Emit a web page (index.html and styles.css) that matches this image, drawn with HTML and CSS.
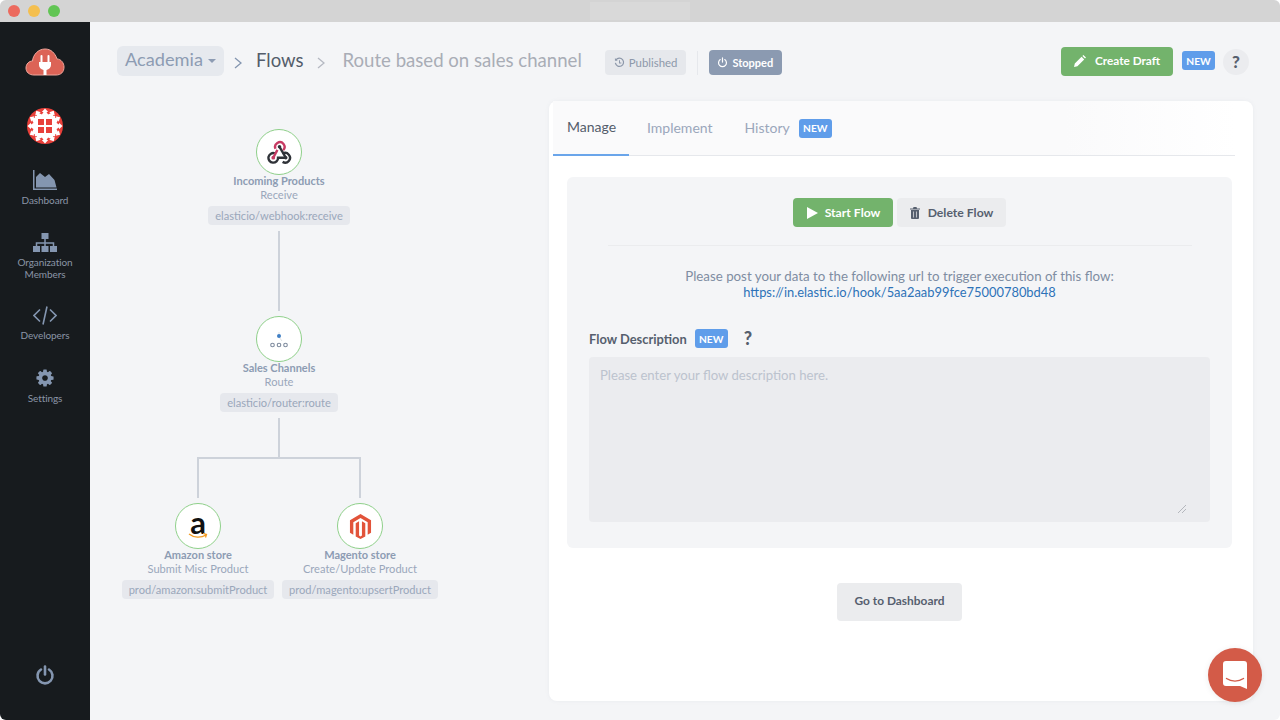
FILE: index.html
```html
<!DOCTYPE html>
<html lang="en">
<head>
<meta charset="utf-8">
<title>Route based on sales channel</title>
<link rel="stylesheet" href="styles.css">
</head>
<body>
<div class="window">
  <div class="titlebar">
    <span class="light red"></span><span class="light yellow"></span><span class="light green"></span>
    <span class="title-tab"></span>
  </div>
  <div class="app">
    <aside class="sidebar">
      <svg class="logo-cloud" viewBox="0 0 40 28" width="40" height="28"><path d="M9 27C4 27 1 24 1 20c0-4 3-7 6.500-7C8 7 13 1 20 1c6 0 10 4 12 10 4 0 7 4 7 8 0 5-3 8-8 8z" fill="#dc6356" stroke="#f0a79c" stroke-width="1"/><path d="M16.500 8v6M23.500 8v6" stroke="#fff" stroke-width="2" stroke-linecap="round"/><path d="M14 14h12v3c0 2.500-2 4.500-4.500 5v5h-3v-5C16 21.500 14 19.500 14 17z" fill="#fff"/></svg>
      <svg class="logo-org" viewBox="0 0 36 36" width="36" height="36">
        <defs>
          <clipPath id="disc"><circle cx="18" cy="18" r="18"/></clipPath>
          <path id="tree" d="M18 .5l3.200 3.500h-1.700l2.500 4h-8l2.500-4h-1.700z"/>
        </defs>
        <circle cx="18" cy="18" r="18" fill="#e8403a"/>
        <g clip-path="url(#disc)" fill="#fff">
          <use href="#tree"/>
          <use href="#tree" transform="rotate(30 18 18)"/>
          <use href="#tree" transform="rotate(60 18 18)"/>
          <use href="#tree" transform="rotate(90 18 18)"/>
          <use href="#tree" transform="rotate(120 18 18)"/>
          <use href="#tree" transform="rotate(150 18 18)"/>
          <use href="#tree" transform="rotate(180 18 18)"/>
          <use href="#tree" transform="rotate(210 18 18)"/>
          <use href="#tree" transform="rotate(240 18 18)"/>
          <use href="#tree" transform="rotate(270 18 18)"/>
          <use href="#tree" transform="rotate(300 18 18)"/>
          <use href="#tree" transform="rotate(330 18 18)"/>
          <rect x="8" y="8" width="20" height="20"/>
        </g>
        <g fill="#e8403a"><rect x="11" y="11" width="6" height="6"/><rect x="19" y="11" width="6" height="6"/><rect x="11" y="19" width="6" height="6"/><rect x="19" y="19" width="6" height="6"/></g>
      </svg>
      <nav class="nav">
        <a class="nav-item">
          <svg viewBox="0 0 24 20" width="24" height="20"><path d="M0 0h1.500v18.500H24V20H0z" fill="#8496b0"/><path d="M3 17.500V7l4-4 5 4 4-3 5.500 6 2 7.500z" fill="#8496b0"/></svg>
          <span>Dashboard</span>
        </a>
        <a class="nav-item">
          <svg viewBox="0 0 24 19" width="24" height="19"><path d="M8.500 0h7v6h-7z" fill="#8496b0"/><path d="M12 6v4M3.500 13v-3h17v3M12 10v3" fill="none" stroke="#8496b0" stroke-width="1.500"/><path d="M0 13h7v6H0zM8.500 13h7v6h-7zM17 13h7v6h-7z" fill="#8496b0"/></svg>
          <span>Organization<br>Members</span>
        </a>
        <a class="nav-item">
          <svg viewBox="0 0 24 19" width="24" height="19"><path d="M7 3.500L1 9.500l6 6M17 3.500l6 6-6 6M14 .5L10 18.500" fill="none" stroke="#8496b0" stroke-width="1.600"/></svg>
          <span>Developers</span>
        </a>
        <a class="nav-item">
          <svg viewBox="0 0 1792 1792" width="20" height="20"><path fill="#8496b0" d="M1152 896q0-106-75-181t-181-75-181 75-75 181 75 181 181 75 181-75 75-181zm512-109v222q0 12-8 23t-20 13l-185 28q-19 54-39 91 35 50 107 138 10 12 10 25t-9 23q-27 37-99 108t-94 71q-12 0-26-9l-138-108q-44 23-91 38-16 136-29 186-7 28-36 28h-222q-14 0-24.500-8.500t-11.500-21.500l-28-184q-49-16-90-37l-141 107q-10 9-25 9-14 0-25-11-126-114-165-168-7-10-7-23 0-12 8-23 15-21 51-66.500t54-70.500q-27-50-41-99l-183-27q-13-2-21-12.500t-8-23.500v-222q0-12 8-23t19-13l186-28q14-46 39-92-40-57-107-138-10-12-10-24 0-10 9-23 26-36 98.500-107.500t94.500-71.500q13 0 26 10l138 107q44-23 91-38 16-136 29-186 7-28 36-28h222q14 0 24.500 8.500t11.500 21.500l28 184q49 16 90 37l142-107q9-9 24-9 13 0 25 10 129 119 165 170 7 8 7 22 0 12-8 23-15 21-51 66.500t-54 70.500q26 50 41 98l183 28q13 2 21 12.500t8 23.500z"/></svg>
          <span>Settings</span>
        </a>
      </nav>
      <svg class="power" viewBox="0 0 20 20" width="20" height="20"><path d="M6 4.500a7.500 7.500 0 1 0 8 0" fill="none" stroke="#8496b0" stroke-width="2.600" stroke-linecap="round"/><path d="M10 1.500v8" stroke="#8496b0" stroke-width="2.600" stroke-linecap="round"/></svg>
    </aside>
    <main class="main">
      <header class="header">
        <button class="crumb-pill">Academia<span class="caret"></span></button>
        <svg class="chev chev-a" viewBox="0 0 8 12" width="8" height="12"><path d="M1 1l6 5-6 5" fill="none" stroke="#8496b0" stroke-width="1.300"/></svg>
        <span class="crumb">Flows</span>
        <svg class="chev chev-b" viewBox="0 0 8 12" width="8" height="12"><path d="M1 1l6 5-6 5" fill="none" stroke="#b5b9c2" stroke-width="1.300"/></svg>
        <span class="crumb-title">Route based on sales channel</span>
        <span class="status published">
          <svg viewBox="0 0 12 12" width="11" height="11"><path d="M2.200 3.200A4.500 4.500 0 1 1 1.500 6.500" fill="none" stroke="#8d98aa" stroke-width="1.300"/><path d="M1 1v3h3z" fill="#8d98aa"/><path d="M6 3.500V6.500h2" fill="none" stroke="#8d98aa" stroke-width="1.100"/></svg>
          Published
        </span>
        <span class="v-divider"></span>
        <span class="status stopped">
          <svg viewBox="0 0 12 12" width="11" height="11"><path d="M3.500 2.800a4.300 4.300 0 1 0 5 0" fill="none" stroke="#fff" stroke-width="1.300" stroke-linecap="round"/><path d="M6 1v4.500" stroke="#fff" stroke-width="1.300" stroke-linecap="round"/></svg>
          Stopped
        </span>
        <span class="spacer"></span>
        <button class="btn btn-green btn-draft">
          <svg viewBox="0 0 12 12" width="12" height="12"><path d="M0 12l.8-3.400L7.600 1.800l2.600 2.600-6.800 6.800zM8.400 1l1-1L12 2.600l-1 1z" fill="#fff"/></svg>
          Create Draft
        </button>
        <span class="badge badge-head">NEW</span>
        <span class="help-circle">?</span>
      </header>
      <div class="body">
        <section class="canvas">
          <svg class="wires" viewBox="0 0 459 600" width="459" height="600"><path d="M189 130v80M189 317v40M108 397v-40h162v40" fill="none" stroke="#cdd2da" stroke-width="2"/></svg>
          <div class="node n1">
            <span class="disc">
              <svg viewBox="0 0 24 24" width="25" height="25"><g fill="none" stroke-width="2.300"><path d="M12 6.500L18 17" stroke="#2f3238"/><path d="M7.500 12.800A4.600 4.600 0 1 0 10.600 17H18" stroke="#2f3238"/><path d="M15 13.200A4.600 4.600 0 1 1 15 21" stroke="#2f3238"/><path d="M8.200 8.500A4.500 4.500 0 1 1 15.500 9.800" stroke="#c73a63"/><path d="M10 9.500L6 17" stroke="#c73a63"/></g><circle cx="6" cy="17" r="1.800" fill="#c73a63"/><circle cx="12" cy="6.500" r="1.700" fill="#2f3238"/><circle cx="18" cy="17" r="1.700" fill="#2f3238"/></svg>
            </span>
            <strong>Incoming Products</strong>
            <em>Receive</em>
            <code>elasticio/webhook:receive</code>
          </div>
          <div class="node n2">
            <span class="disc">
              <svg viewBox="0 0 24 24" width="24" height="24"><path d="M12 5v5M12 10l3 4" stroke="#d5d9df" stroke-width=".8" fill="none"/><circle cx="12" cy="9" r="2" fill="#3f7fc4"/><g fill="none" stroke="#7d8a9d" stroke-width="1.100"><circle cx="5.500" cy="18" r="1.800"/><circle cx="12" cy="18" r="1.800"/><circle cx="18.500" cy="18" r="1.800"/></g></svg>
            </span>
            <strong>Sales Channels</strong>
            <em>Route</em>
            <code>elasticio/router:route</code>
          </div>
          <div class="node n3">
            <span class="disc">
              <span class="amazon-a">a</span>
              <svg class="amazon-smile" viewBox="0 0 20 6" width="20" height="6"><path d="M1 1c5 4 12 4 17 1M15 .5l3.500 1-1 3" fill="none" stroke="#f39a1f" stroke-width="1.300"/></svg>
            </span>
            <strong>Amazon store</strong>
            <em>Submit Misc Product</em>
            <code>prod/amazon:submitProduct</code>
          </div>
          <div class="node n4">
            <span class="disc">
              <svg viewBox="0 0 24 26" width="23" height="25"><path d="M12 0l11 6.500v13L19.500 21.500V8.500L12 4 4.500 8.500v13L1 19.500v-13z" fill="#e2533a"/><path d="M10.500 7.500v15l1.500 1 1.500-1v-15l3.500 2v14L12 26l-5-2.500v-14z" fill="#e2533a"/></svg>
            </span>
            <strong>Magento store</strong>
            <em>Create/Update Product</em>
            <code>prod/magento:upsertProduct</code>
          </div>
        </section>
        <section class="card">
          <div class="tabs">
            <a class="tab active">Manage</a>
            <a class="tab">Implement</a>
            <a class="tab tab-last">History</a>
            <span class="badge">NEW</span>
          </div>
          <div class="panel">
            <div class="actions">
              <button class="btn btn-green btn-start">
                <svg viewBox="0 0 12 12" width="12" height="12"><path d="M1 0l11 6-11 6z" fill="#fff"/></svg>
                Start Flow
              </button>
              <button class="btn btn-grey btn-delete">
                <svg viewBox="0 0 10 12" width="10" height="12"><path d="M3.500 0h3l.5 1.500h3v1H0v-1h3zM1 3h8v8a1 1 0 0 1-1 1H2a1 1 0 0 1-1-1z" fill="#565f6e"/><path d="M3.500 4.500v6M6.500 4.500v6" stroke="#ebecee" stroke-width=".7"/></svg>
                Delete Flow
              </button>
            </div>
            <hr class="rule">
            <p class="hint">Please post your data to the following url to trigger execution of this flow:<br><a class="hook">https://in.elastic.io/hook/5aa2aab99fce75000780bd48</a></p>
            <div class="desc-head">
              <label class="desc-label" for="desc">Flow Description</label>
              <span class="badge">NEW</span>
              <span class="help">?</span>
            </div>
            <div class="desc-wrap">
              <textarea id="desc" class="desc" placeholder="Please enter your flow description here."></textarea>
              <svg class="grip" viewBox="0 0 8 8" width="8" height="8"><path d="M0 8l8-8M4 8l4-4" stroke="#b4b7bd" stroke-width="1"/></svg>
            </div>
          </div>
          <div class="foot"><button class="btn btn-grey btn-dash">Go to Dashboard</button></div>
        </section>
      </div>
    </main>
  </div>
  <button class="chat" aria-label="Chat">
    <svg viewBox="0 0 24 28" width="24" height="28"><path d="M3 0h18a3 3 0 0 1 3 3v25l-7-3H3a3 3 0 0 1-3-3V3a3 3 0 0 1 3-3z" fill="#fff"/><path d="M3.500 17.500c5 3.500 12 3.500 17 0" fill="none" stroke="#d35b48" stroke-width="1.400" stroke-linecap="round"/></svg>
  </button>
</div>
</body>
</html>
```
FILE: styles.css
```css
* { box-sizing: border-box; }
html, body { margin: 0; height: 100%; background: #fff; }
body { font-family: "Lato", "Noto Sans", sans-serif; overflow: hidden; }
button { font-family: inherit; border: 0; padding: 0; }
.window { position: relative; width: 1280px; height: 720px; display: flex; flex-direction: column; border-radius: 6px; overflow: hidden; background: #f4f5f7; }

.titlebar { flex: 0 0 22px; background: #d4d4d4; display: flex; align-items: center; padding-left: 8px; gap: 8px; position: relative; }
.light { width: 12px; height: 12px; border-radius: 50%; }
.light.red { background: #ec6a5e; }
.light.yellow { background: #f4bf4f; }
.light.green { background: #61c554; }
.title-tab { width: 100px; height: 18px; background: #d9d9d9; margin-left: 522px; }

.app { flex: 1; display: flex; min-height: 0; }
.sidebar { flex: 0 0 90px; background: #171b1e; display: flex; flex-direction: column; align-items: center; padding-top: 26px; }
.logo-cloud { display: block; }
.logo-org { display: block; margin-top: 32px; }
.nav { display: flex; flex-direction: column; align-items: center; gap: 26.500px; margin-top: 26px; }
.nav-item { display: flex; flex-direction: column; align-items: center; gap: 4px; color: #8a95a6; font-size: 10px; letter-spacing: -.1px; line-height: 12px; text-align: center; }
.nav-item svg { display: block; }
.power { margin-top: auto; margin-bottom: 35px; }

.main { flex: 1; display: flex; flex-direction: column; min-width: 0; }
.header { flex: 0 0 79px; display: flex; align-items: center; padding: 0 31px 0 27px; }
.crumb-pill { height: 30px; width: 107px; margin-top: -1px; padding: 0 8px 5px; background: #e6e9ee; border-radius: 6px; color: #8d9cb3; font-size: 18.200px; display: flex; align-items: center; }
.caret { width: 0; height: 0; margin-left: 5px; margin-top: 4px; border: 4px solid transparent; border-top-color: #8d9cb3; border-bottom: 0; }
.chev { flex: none; }
.chev-a { margin: 2px 14px 0 10px; }
.chev-b { margin: 2px 17px 0 14px; }
.crumb { color: #545d6b; font-size: 18.500px; margin-top: -3px; }
.crumb-title { color: #a9adb6; font-size: 18.600px; margin-top: -3px; margin-right: 23px; }
.status { height: 25px; margin-top: 2px; padding: 0 9px; border-radius: 4px; display: flex; align-items: center; gap: 4px; font-size: 11.400px; }
.published { background: #e6e8ec; color: #8d98aa; }
.stopped { background: #8b9ab1; color: #fff; font-weight: 700; font-size: 11px; padding: 0 9px 0 8px; }
.v-divider { width: 1px; height: 24px; margin: 2px 11px 0 11px; background: #e6e8ec; }
.spacer { flex: 1; }
.btn { display: flex; align-items: center; justify-content: center; border-radius: 4px; font-weight: 700; font-size: 12.200px; }
.btn-green { background: #73b36c; color: #fff; }
.btn-grey { background: #ebecee; color: #565f6e; }
.btn-draft { width: 112px; height: 29px; gap: 9px; margin-top: -1px; padding-bottom: 1px; font-size: 11.800px; }
.badge { display: inline-flex; align-items: center; justify-content: center; width: 33px; height: 19px; border-radius: 3px; background: #5f9dea; color: #fff; font-size: 10.200px; font-weight: 700; }
.badge-head { margin: -2px 8px 0 9px; }
.help-circle { width: 26px; height: 26px; border-radius: 50%; background: #ebecef; color: #565f6e; font-weight: 900; font-size: 17px; display: flex; align-items: center; justify-content: center; }

.body { flex: 1; display: flex; min-height: 0; padding-bottom: 19px; }
.canvas { flex: 0 0 459px; position: relative; }
.wires { position: absolute; left: 0; top: 0; }
.node { position: absolute; width: 240px; display: flex; flex-direction: column; align-items: center; color: #9aa7bb; font-size: 11.100px; line-height: 14px; }
.n1 { left: 69px; top: 28px; }
.n2 { left: 69px; top: 215px; }
.n3 { left: -12px; top: 402px; }
.n4 { left: 150px; top: 402px; }
.disc { position: relative; width: 46px; height: 46px; border-radius: 50%; background: #fff; border: 1.500px solid #8fd08a; display: flex; align-items: center; justify-content: center; }
.node strong { margin-top: -1px; font-weight: 700; font-size: 11px; color: #8d9cb3; }
.node em { font-style: normal; }
.node code { font-family: inherit; margin-top: 4px; height: 19px; padding: 0 7px; border-radius: 4px; background: #e6e8ed; line-height: 19px; white-space: nowrap; }
.amazon-a { color: #111; font-size: 31px; font-weight: 700; line-height: 24px; margin-top: -8px; }
.amazon-smile { position: absolute; left: 11.500px; top: 28.500px; }

.card { width: 704px; background: #fff; border-radius: 8px; box-shadow: 0 0 4px rgba(120, 130, 150, .08); }
.tabs { height: 55px; margin: 0 18px 0 4px; display: flex; align-items: center; background: linear-gradient(90deg, #fafafb 75%, #fff); border-bottom: 1px solid #e6e8ec; }
.tab { height: 55px; padding: 0 14px 2px; display: flex; align-items: center; color: #9aa7bb; font-size: 14px; margin-right: 4px; }
.tab.active { width: 76px; color: #545d6b; border-bottom: 2px solid #6aa5ea; }
.tab-last { margin-right: 0; padding-right: 9px; }
.panel { margin: 21px 21px 0 18px; height: 371px; background: #f4f5f7; border-radius: 6px; padding: 21px 22px 0; display: flex; flex-direction: column; }
.actions { display: flex; justify-content: center; gap: 4px; }
.btn-start { width: 100px; height: 29px; gap: 7px; }
.btn-delete { width: 109px; height: 29px; gap: 8px; }
.rule { width: 584px; height: 1px; margin: 18px auto 0; border: 0; background: #ebecee; }
.hint { margin: 22px 0 0; text-align: center; color: #7f8da2; font-size: 13.300px; line-height: 16px; }
.hook { color: #2d72b8; font-size: 12.900px; }
.desc-head { display: flex; align-items: center; margin-top: 29px; height: 19px; }
.desc-label { color: #565f6e; font-weight: 700; font-size: 12.900px; margin-right: 8px; }
.help { margin-left: 16px; color: #565f6e; font-weight: 900; font-size: 18px; line-height: 19px; }
.desc-wrap { position: relative; margin-top: 9px; }
.desc { display: block; width: 621px; height: 165px; padding: 10px 11px; background: #ebecef; border: 0; border-radius: 4px; font-family: inherit; font-size: 13.150px; resize: none; }
.desc::placeholder { color: #bcc3ce; }
.grip { position: absolute; right: 24px; bottom: 9px; }
.foot { display: flex; justify-content: center; margin-top: 35px; margin-right: 3px; }
.btn-dash { width: 125px; height: 38px; padding-bottom: 3px; font-size: 11.900px; }

.chat { position: absolute; left: 1208px; top: 648px; width: 54px; height: 54px; border-radius: 50%; background: #d35b48; display: flex; align-items: center; justify-content: center; box-shadow: 0 1px 6px rgba(0, 0, 0, .08); }
```
